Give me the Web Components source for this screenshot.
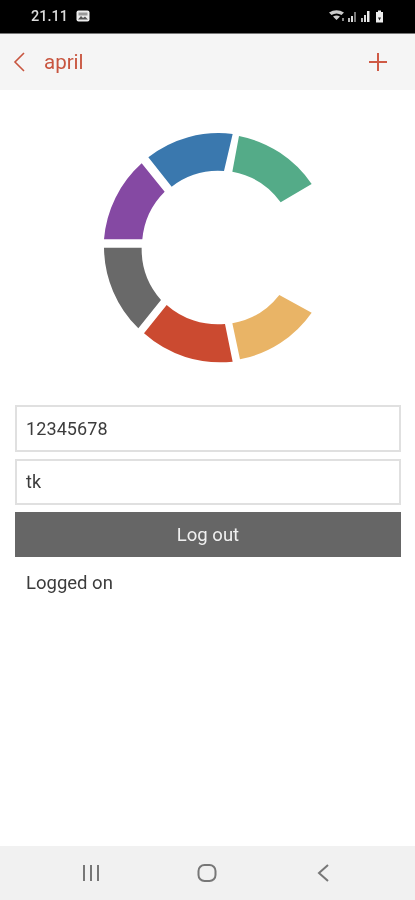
<!DOCTYPE html>
<html>
<head>
<meta charset="utf-8">
<title>april</title>
<style>
  html, body { margin: 0; padding: 0; background: #fff; }
  body { font-family: Roboto, "Liberation Sans", sans-serif; }
</style>
</head>
<body>
<app-screen>
  <status-bar slot="status" time="21.11"></status-bar>
  <app-header slot="header" title="april"></app-header>
  <logo-ring></logo-ring>
  <login-form>
    <text-field>12345678</text-field>
    <text-field>tk</text-field>
    <action-button>Log out</action-button>
    <status-line>Logged on</status-line>
  </login-form>
  <nav-bar slot="nav"></nav-bar>
</app-screen>

<script>
class AppScreen extends HTMLElement {
  constructor() {
    super();
    this.attachShadow({ mode: "open" });
    this.shadowRoot.innerHTML = `
      <style>
        :host { display: flex; flex-direction: column; height: 900px; width: 415px; overflow: hidden; }
        main { flex: 1; display: flex; flex-direction: column; }
      </style>
      <slot name="status"></slot>
      <slot name="header"></slot>
      <main><slot></slot></main>
      <slot name="nav"></slot>
    `;
  }
}

class StatusBar extends HTMLElement {
  constructor() {
    super();
    this.attachShadow({ mode: "open" });
    this.shadowRoot.innerHTML = `
      <style>
        :host { display: flex; align-items: center; height: 33px; padding: 0 29px 0 31px; background: #000; color: #ddd;
          font: 500 14.5px Roboto, sans-serif; border-bottom: 1px solid #777; filter: blur(.5px); }
        span { margin-right: 8px; }
        svg { display: block; margin-bottom: 1px; }
        .grow { flex: 1; }
      </style>
      <span>${this.getAttribute("time")}</span>
      <svg width="14" height="12" viewBox="0 0 14 12">
        <rect x="0.5" y="0.5" width="13" height="11" rx="2" fill="#eee"/>
        <path d="M2 9.5l3-3.500 2 2 2-1.500 3 3z" fill="#555"/>
        <rect x="2.5" y="2.5" width="9" height="3" fill="#999"/>
      </svg>
      <div class="grow"></div>
      <svg width="57" height="14" viewBox="0 0 57 14">
        <path d="M0 3.5Q7.500 -1 15 3.500L12.500 6Q7.500 3 2.500 6zM4 7.500Q7.500 5.500 11 7.500L7.500 11z" fill="#ccc"/>
        <rect x="13" y="9" width="2" height="3" fill="#888"/>
        <rect x="19" y="9" width="2" height="4" fill="#bbb"/>
        <rect x="22" y="7" width="2" height="6" fill="#ddd"/>
        <rect x="25" y="3" width="2" height="10" fill="#777"/>
        <rect x="32" y="9" width="2" height="4" fill="#bbb"/>
        <rect x="35" y="6" width="2" height="7" fill="#ddd"/>
        <rect x="38" y="2" width="2.500" height="11" fill="#eee"/>
        <path d="M47 3h2V1.500h3V3h2v10.500h-7z" fill="#eee"/>
        <path d="M50.500 4.500v4h1.500l-1.500 3-1.500-3h1.500z" fill="#222"/>
      </svg>
    `;
  }
}

class AppHeader extends HTMLElement {
  constructor() {
    super();
    this.attachShadow({ mode: "open" });
    this.shadowRoot.innerHTML = `
      <style>
        :host { display: flex; align-items: center; height: 56px; padding: 0 28px 0 13px; background: #f5f5f5; color: #c8553f;
          font: 400 20.5px Roboto, sans-serif; filter: blur(.5px); }
        svg { display: block; }
        span { margin-left: 19px; flex: 1; padding-bottom: 1px; }
      </style>
      <svg width="12" height="20" viewBox="0 0 12 20" fill="none" stroke="#c8553f" stroke-width="1.600">
        <path d="M11 1L2 10l9 9"/>
      </svg>
      <span>${this.getAttribute("title")}</span>
      <svg width="18" height="18" viewBox="0 0 18 18" fill="none" stroke="#cf5a45" stroke-width="2">
        <path d="M9 0v18M0 9h18"/>
      </svg>
    `;
  }
}

class LogoRing extends HTMLElement {
  constructor() {
    super();
    this.attachShadow({ mode: "open" });
    // segment coordinates follow a 3x grid around centre (385,382), outer r 343, inner r 230
    this.shadowRoot.innerHTML = `
      <style>
        :host { display: block; height: 250px; padding: 30px 0 0 90px; filter: blur(.3px); }
        svg { display: block; }
      </style>
      <svg width="235" height="250" viewBox="0 0 705 750">
        <path fill="#3a78ae" d="M175 112A343 343 0 0 1 428 42L402 153A230 230 0 0 0 245 200Z"/>
        <path fill="#54ab88" d="M447 48A343 343 0 0 1 665 192L572 247A230 230 0 0 0 427 155Z"/>
        <path fill="#e9b466" d="M568 525L665 578A343 343 0 0 1 450 718L427 610A230 230 0 0 0 568 525Z"/>
        <path fill="#cb4a30" d="M230 555A230 230 0 0 0 405 612L428 725A343 343 0 0 1 162 640Z"/>
        <path fill="#696969" d="M42 383H155A230 230 0 0 0 213 540L145 625A343 343 0 0 1 42 383Z"/>
        <path fill="#8549a3" d="M42 358A343 343 0 0 1 155 130L224 215A230 230 0 0 0 157 358Z"/>
      </svg>
    `;
  }
}

class LoginForm extends HTMLElement {
  constructor() {
    super();
    this.attachShadow({ mode: "open" });
    this.shadowRoot.innerHTML = `
      <style>
        :host { display: flex; flex-direction: column; gap: 7px; margin-top: 35px; padding: 0 14px 0 15px; }
      </style>
      <slot></slot>
    `;
  }
}

class TextField extends HTMLElement {
  constructor() {
    super();
    this.attachShadow({ mode: "open" });
    this.shadowRoot.innerHTML = `
      <style>
        :host { display: flex; align-items: center; box-sizing: border-box; height: 46.5px; padding: 0 9px; background: #fff; border: 2px solid #e0e0e0;
          color: #3c3c3c; font: 400 18px Roboto, sans-serif; letter-spacing: .1px; filter: blur(.5px); }
      </style>
      <slot></slot>
    `;
  }
}

class ActionButton extends HTMLElement {
  constructor() {
    super();
    this.attachShadow({ mode: "open" });
    this.shadowRoot.innerHTML = `
      <style>
        :host { display: flex; align-items: center; justify-content: center; height: 45px; background: #666;
          color: #f0f0f0; font: 400 18.5px Roboto, sans-serif; filter: blur(.5px); }
      </style>
      <slot></slot>
    `;
  }
}

class StatusLine extends HTMLElement {
  constructor() {
    super();
    this.attachShadow({ mode: "open" });
    this.shadowRoot.innerHTML = `
      <style>
        :host { display: block; padding: 7px 11px 0; color: #3c3c3c; font: 400 18.5px/24px Roboto, sans-serif; filter: blur(.5px); }
      </style>
      <slot></slot>
    `;
  }
}

class NavBar extends HTMLElement {
  constructor() {
    super();
    this.attachShadow({ mode: "open" });
    this.shadowRoot.innerHTML = `
      <style>
        :host { display: grid; grid-template-columns: repeat(3, 116px); padding-left: 33px; align-items: center; height: 54px; background: #f1f1f1; filter: blur(.5px); }
        svg { display: block; justify-self: center; margin-bottom: 1px; }
      </style>
      <svg width="18" height="16" viewBox="0 0 18 16" fill="none" stroke="#777" stroke-width="2">
        <path d="M2 0v16M9 0v16M16 0v16"/>
      </svg>
      <svg width="20" height="20" viewBox="0 0 20 20" fill="none" stroke="#777" stroke-width="2">
        <rect x="1.500" y="2" width="17" height="16" rx="6"/>
      </svg>
      <svg width="12" height="18" viewBox="0 0 12 18" fill="none" stroke="#777" stroke-width="2">
        <path d="M11 1L2 9l9 8"/>
      </svg>
    `;
  }
}

customElements.define("app-screen", AppScreen);
customElements.define("status-bar", StatusBar);
customElements.define("app-header", AppHeader);
customElements.define("logo-ring", LogoRing);
customElements.define("login-form", LoginForm);
customElements.define("text-field", TextField);
customElements.define("action-button", ActionButton);
customElements.define("status-line", StatusLine);
customElements.define("nav-bar", NavBar);
</script>
</body>
</html>
